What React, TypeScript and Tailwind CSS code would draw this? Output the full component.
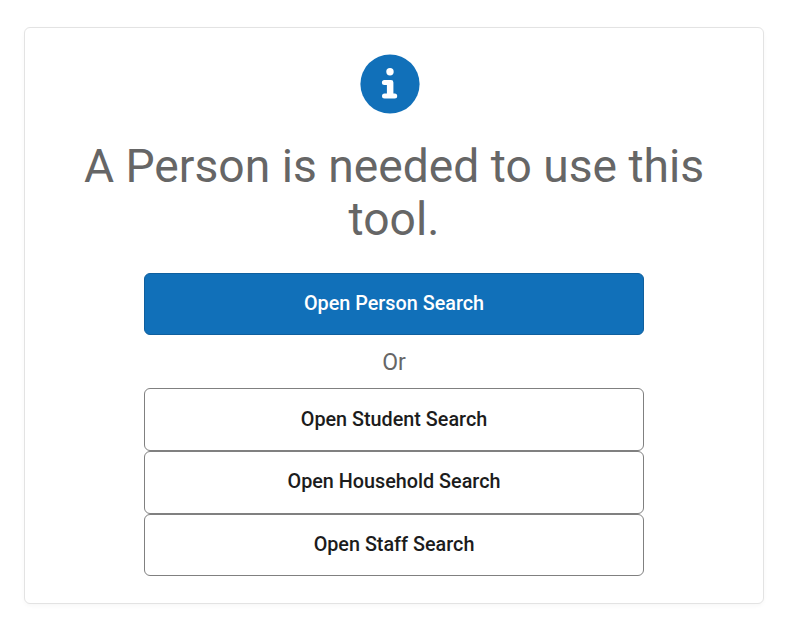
export default function App() {
  return (
    <div className="min-h-[631px] bg-white px-6 pt-[27px] font-['Roboto',sans-serif]">
      <div className="flex h-[577px] w-[740px] flex-col items-center rounded-md border border-[#e3e3e3] bg-white pt-[26px] shadow-[0_2px_4px_rgba(0,0,0,0.03)]">
        <svg width="60" height="60" viewBox="0 0 60 60" className="mr-[9px] shrink-0">
          <circle cx="30" cy="30" r="29.6" fill="#1170b9" />
          <circle cx="30" cy="17.8" r="3.7" fill="#fff" />
          <path
            d="M24.4 26h6.6a2.4 2.4 0 0 1 2.4 2.4v11.2h1.3a2.5 2.5 0 0 1 0 5H24.5a2.5 2.5 0 0 1 0-5h2.4v-8.6h-2.5a2.5 2.5 0 0 1 0-5z"
            fill="#fff"
          />
        </svg>
        <h1 className="mt-[26px] w-[660px] text-center text-[46.2px] leading-[53px] font-normal text-[#666666]">
          A Person is needed to use this tool.
        </h1>
        <div className="mt-[27px] flex w-[500px] flex-col">
          <button className="h-[62px] rounded-md border border-[#0f5f9e] bg-[#1170b9] text-[19.8px] font-medium text-white">
            Open Person Search
          </button>
          <div className="flex h-[53px] items-center justify-center pt-1 text-[23px] text-[#666666]">Or</div>
          <button className="h-[63px] rounded-md border border-[#808080] bg-white text-[19.8px] font-medium text-[#1c1c1c]">
            Open Student Search
          </button>
          <button className="h-[63px] rounded-md border border-[#808080] bg-white pb-0.5 text-[19.8px] font-medium text-[#1c1c1c]">
            Open Household Search
          </button>
          <button className="h-[62px] rounded-md border border-[#808080] bg-white text-[19.8px] font-medium text-[#1c1c1c]">
            Open Staff Search
          </button>
        </div>
      </div>
    </div>
  );
}
